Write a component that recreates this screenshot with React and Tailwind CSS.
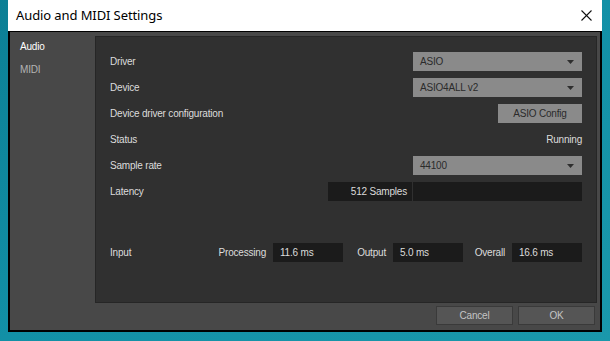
import React from "react";

const lbl = "text-[10px] tracking-[-0.2px] text-[#dcdcdc]";
const font = { fontFamily: '"Liberation Sans", Arial, sans-serif' };

function Arrow() {
  return (
    <svg width="7" height="4" viewBox="0 0 7 4" className="shrink-0">
      <polygon points="0,0 7,0 3.5,4" fill="#2e2e2e" />
    </svg>
  );
}

function Dropdown({ value }) {
  return (
    <div className="w-[169px] h-[19px] bg-[#8a8a8a] flex items-center justify-between pl-[7px] pr-[8px]">
      <span className="text-[10px] tracking-[-0.2px] text-[#2b2b2b]">{value}</span>
      <Arrow />
    </div>
  );
}

function Row({ label, children }) {
  return (
    <div className="h-[19px] flex items-center justify-between">
      <span className={lbl}>{label}</span>
      {children}
    </div>
  );
}

function Box({ value }) {
  return (
    <div className="w-[70px] h-[19px] bg-[#1b1b1b] flex items-center pl-[7px] shrink-0">
      <span className="text-[10px] tracking-[-0.2px] text-[#dcdcdc]">{value}</span>
    </div>
  );
}

export default function App() {
  return (
    <div
      className="w-[610px] h-[341px] overflow-hidden bg-gradient-to-br from-[#0c7f95] via-[#1290a6] to-[#1a98ab] pl-[8px]"
      style={font}
    >
      <div className="w-[594px] flex flex-col">
        <div className="h-[31px] bg-white flex items-center justify-between pl-[8px] pr-[10px]">
          <span
            className="text-[13px] tracking-[-0.1px] text-black"
            style={{ fontFamily: '"Noto Sans", "Open Sans", sans-serif' }}
          >
            Audio and MIDI Settings
          </span>
          <svg width="11" height="11" viewBox="0 0 11 11">
            <line x1="0.5" y1="0.5" x2="10.5" y2="10.5" stroke="#111" strokeWidth="1.1" />
            <line x1="10.5" y1="0.5" x2="0.5" y2="10.5" stroke="#111" strokeWidth="1.1" />
          </svg>
        </div>
        <div className="border-2 border-t-[1px] border-black bg-[#484848] h-[301px] flex flex-col">
          <div className="flex">
            <div className="w-[85px] flex flex-col pl-[10px] pt-[7px] gap-[8px]">
              <span className="text-[10px] tracking-[-0.2px] text-white">Audio</span>
              <span className="text-[10px] tracking-[-0.2px] text-[#b4b4b4]">MIDI</span>
            </div>
            <div className="mt-[4px] w-[502px] h-[267px] bg-[#303030] border border-[#262626] pt-[15px] pl-[14px] pr-[14px] flex flex-col">
              <div className="flex flex-col gap-[7px]">
                <Row label="Driver">
                  <Dropdown value="ASIO" />
                </Row>
                <Row label="Device">
                  <Dropdown value="ASIO4ALL v2" />
                </Row>
                <Row label="Device driver configuration">
                  <div className="w-[84px] h-[19px] bg-[#8a8a8a] flex items-center justify-center">
                    <span className="text-[10px] tracking-[-0.2px] text-[#2b2b2b]">ASIO Config</span>
                  </div>
                </Row>
                <Row label="Status">
                  <span className={lbl}>Running</span>
                </Row>
                <Row label="Sample rate">
                  <Dropdown value="44100" />
                </Row>
                <Row label="Latency">
                  <div className="flex gap-[1px]">
                    <div className="w-[84px] h-[19px] bg-[#1b1b1b] flex items-center justify-end pr-[5px]">
                      <span className="text-[10px] tracking-[-0.2px] text-[#dcdcdc]">512 Samples</span>
                    </div>
                    <div className="w-[169px] h-[19px] bg-[#1b1b1b]" />
                  </div>
                </Row>
              </div>
              <div className="mt-[42px] h-[19px] flex items-center">
                <span className={`${lbl} flex-1`}>Input</span>
                <span className={`${lbl} mr-[7px]`}>Processing</span>
                <Box value="11.6 ms" />
                <div className="w-[50px] flex justify-end pr-[7px]">
                  <span className={lbl}>Output</span>
                </div>
                <Box value="5.0 ms" />
                <div className="w-[49px] flex justify-end pr-[7px]">
                  <span className={lbl}>Overall</span>
                </div>
                <Box value="16.6 ms" />
              </div>
            </div>
          </div>
          <div className="flex justify-end gap-[5px] pr-[5px] pt-[3px]">
            <div className="w-[77px] h-[19px] bg-[#555555] border border-[#3a3a3a] flex items-center justify-center">
              <span className="text-[10px] tracking-[-0.2px] text-[#c4c4c4]">Cancel</span>
            </div>
            <div className="w-[77px] h-[19px] bg-[#555555] border border-[#3a3a3a] flex items-center justify-center">
              <span className="text-[10px] tracking-[-0.2px] text-[#c4c4c4]">OK</span>
            </div>
          </div>
        </div>
      </div>
    </div>
  );
}
